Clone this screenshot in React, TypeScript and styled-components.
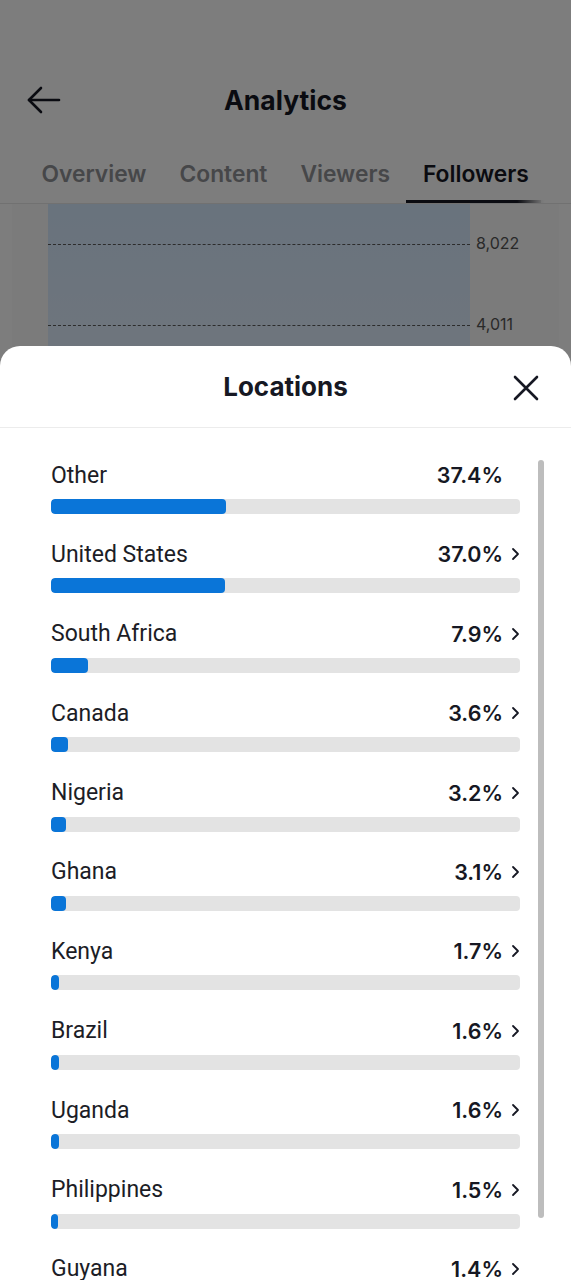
import React from "react"
import styled, { createGlobalStyle } from "styled-components"

const GlobalStyle = createGlobalStyle`
  html, body { margin: 0; padding: 0; background: #fff; }
  body { font-family: "Inter", "Roboto", "Noto Sans", sans-serif; -webkit-font-smoothing: antialiased; }
  * { box-sizing: border-box; }
`

interface Location {
  name: string
  share: number
  drill: boolean
}

const locations: Location[] = [
  { name: "Other", share: 37.4, drill: false },
  { name: "United States", share: 37.0, drill: true },
  { name: "South Africa", share: 7.9, drill: true },
  { name: "Canada", share: 3.6, drill: true },
  { name: "Nigeria", share: 3.2, drill: true },
  { name: "Ghana", share: 3.1, drill: true },
  { name: "Kenya", share: 1.7, drill: true },
  { name: "Brazil", share: 1.6, drill: true },
  { name: "Uganda", share: 1.6, drill: true },
  { name: "Philippines", share: 1.5, drill: true },
  { name: "Guyana", share: 1.4, drill: true },
]

const tabs = ["Overview", "Content", "Viewers", "Followers", "LIVE"]

const Page = styled.div`
  position: relative;
  width: 571px;
  height: 1280px;
  overflow: hidden;
  background: #fff;
`

const TopBar = styled.div`
  height: 140px;
  padding-top: 70px;
  display: flex;
  align-items: flex-start;
  position: relative;
`

const BackButton = styled.div`
  width: 90px;
  height: 60px;
  display: flex;
  align-items: center;
  padding-left: 26px;
`

const PageTitle = styled.div`
  position: absolute;
  left: 0;
  right: 0;
  top: 70px;
  height: 60px;
  display: flex;
  align-items: center;
  justify-content: center;
  font-size: 26.5px;
  font-weight: 700;
  color: #161823;
  pointer-events: none;
`

const TabBar = styled.div`
  position: relative;
  height: 64px;
  display: flex;
  padding-left: 25px;
  border-bottom: 1px solid #e6e6e6;
  white-space: nowrap;
  overflow: hidden;
`

const Tab = styled.div<{ $active: boolean }>`
  position: relative;
  padding: 4px 16.5px 0;
  height: 63px;
  display: flex;
  align-items: center;
  flex-shrink: 0;
  font-size: 22.8px;
  font-weight: 600;
  color: ${(p) => (p.$active ? "#161823" : "#909196")};
  &::after {
    content: "";
    display: ${(p) => (p.$active ? "block" : "none")};
    position: absolute;
    left: 0;
    right: 0;
    bottom: 0;
    height: 3px;
    background: linear-gradient(to right, #161823 80%, #ffffff);
  }
`

const TabFade = styled.div`
  position: absolute;
  right: 0;
  top: 0;
  bottom: 0;
  width: 30px;
  background: linear-gradient(to right, rgba(255, 255, 255, 0.6), #fff 40%);
`

const ChartCard = styled.div`
  margin: 0 12px;
  height: 300px;
  display: flex;
  padding-left: 36px;
  background: #fbfbfb;
`

const ChartArea = styled.div`
  position: relative;
  width: 422px;
  height: 100%;
  background: linear-gradient(to bottom, #d6eaff, #eef4ff);
`

const GridLine = styled.div<{ $top: number }>`
  position: absolute;
  left: 0;
  right: 0;
  top: ${(p) => p.$top}px;
  border-top: 1px dashed #5a5a5a;
`

const AxisLabels = styled.div`
  position: relative;
  flex: 1;
`

const AxisLabel = styled.div<{ $top: number }>`
  position: absolute;
  left: 6px;
  top: ${(p) => p.$top - 11}px;
  font-size: 16px;
  color: #555;
`

const Dim = styled.div`
  position: absolute;
  inset: 0;
  background: rgba(0, 0, 0, 0.51);
`

const Sheet = styled.div`
  position: absolute;
  left: 0;
  right: 0;
  top: 346px;
  bottom: 0;
  background: #fff;
  border-radius: 20px 20px 0 0;
  display: flex;
  flex-direction: column;
`

const SheetHeader = styled.div`
  position: relative;
  flex-shrink: 0;
  height: 82px;
  display: flex;
  align-items: center;
  justify-content: center;
  border-bottom: 1px solid #ececec;
`

const SheetTitle = styled.div`
  font-size: 26px;
  font-weight: 700;
  color: #161823;
  margin-top: -1px;
`

const CloseButton = styled.div`
  position: absolute;
  right: 30px;
  top: 27px;
  width: 30px;
  height: 30px;
  display: flex;
  align-items: center;
  justify-content: center;
`

const List = styled.div`
  position: relative;
  flex: 1;
  min-height: 0;
  overflow: hidden;
  padding: 33px 51px 0 51px;
  display: flex;
  flex-direction: column;
  gap: 26.4px;
`

const Scrollbar = styled.div`
  position: absolute;
  left: 538px;
  top: 32px;
  width: 6px;
  height: 758px;
  border-radius: 3px;
  background: #bdbdbd;
`

const Row = styled.div`
  display: flex;
  flex-direction: column;
  gap: 10px;
  flex-shrink: 0;
`

const RowHead = styled.div`
  height: 28px;
  display: flex;
  align-items: center;
`

const Country = styled.div`
  flex: 1;
  font-family: "Roboto", "Inter", sans-serif;
  font-size: 23px;
  color: #1c1d26;
`

const Share = styled.div`
  font-size: 21.5px;
  font-weight: 600;
  color: #161823;
`

const Chevron = styled.div<{ $hidden: boolean }>`
  width: 17px;
  display: flex;
  justify-content: flex-end;
  visibility: ${(p) => (p.$hidden ? "hidden" : "visible")};
`

const Track = styled.div`
  height: 15px;
  border-radius: 4px;
  background: #e3e3e3;
  overflow: hidden;
`

const Fill = styled.div`
  height: 100%;
  min-width: 6px;
  border-radius: 4px;
  background: #0a75d8;
`

function ArrowLeft() {
  return (
    <svg width="36" height="30" viewBox="0 0 36 30" fill="none" stroke="#161823" strokeWidth="2.6" strokeLinecap="round" strokeLinejoin="round">
      <path d="M33 15H3" />
      <path d="M15 3L3 15l12 12" />
    </svg>
  )
}

function CloseIcon() {
  return (
    <svg width="26" height="26" viewBox="0 0 26 26" fill="none" stroke="#161823" strokeWidth="2.6" strokeLinecap="round">
      <path d="M2 2l22 22M24 2L2 24" />
    </svg>
  )
}

function ChevronIcon() {
  return (
    <svg width="9" height="14" viewBox="0 0 9 14" fill="none" stroke="#161823" strokeWidth="1.8" strokeLinecap="round" strokeLinejoin="round">
      <path d="M2 2l5 5-5 5" />
    </svg>
  )
}

export default function App() {
  return (
    <Page>
      <GlobalStyle />
      <TopBar>
        <BackButton>
          <ArrowLeft />
        </BackButton>
        <PageTitle>Analytics</PageTitle>
      </TopBar>
      <TabBar>
        {tabs.map((t) => (
          <Tab key={t} $active={t === "Followers"}>{t}</Tab>
        ))}
        <TabFade />
      </TabBar>
      <ChartCard>
        <ChartArea>
          <GridLine $top={40} />
          <GridLine $top={121} />
          <GridLine $top={202} />
        </ChartArea>
        <AxisLabels>
          <AxisLabel $top={40}>8,022</AxisLabel>
          <AxisLabel $top={121}>4,011</AxisLabel>
          <AxisLabel $top={202}>0</AxisLabel>
        </AxisLabels>
      </ChartCard>

      <Dim />

      <Sheet>
        <SheetHeader>
          <SheetTitle>Locations</SheetTitle>
          <CloseButton>
            <CloseIcon />
          </CloseButton>
        </SheetHeader>
        <List>
          <Scrollbar />
          {locations.map((loc) => (
            <Row key={loc.name}>
              <RowHead>
                <Country>{loc.name}</Country>
                <Share>{loc.share.toFixed(1)}%</Share>
                <Chevron $hidden={!loc.drill}>
                  <ChevronIcon />
                </Chevron>
              </RowHead>
              <Track>
                <Fill style={{ width: `${loc.share}%` }} />
              </Track>
            </Row>
          ))}
        </List>
      </Sheet>
    </Page>
  )
}
